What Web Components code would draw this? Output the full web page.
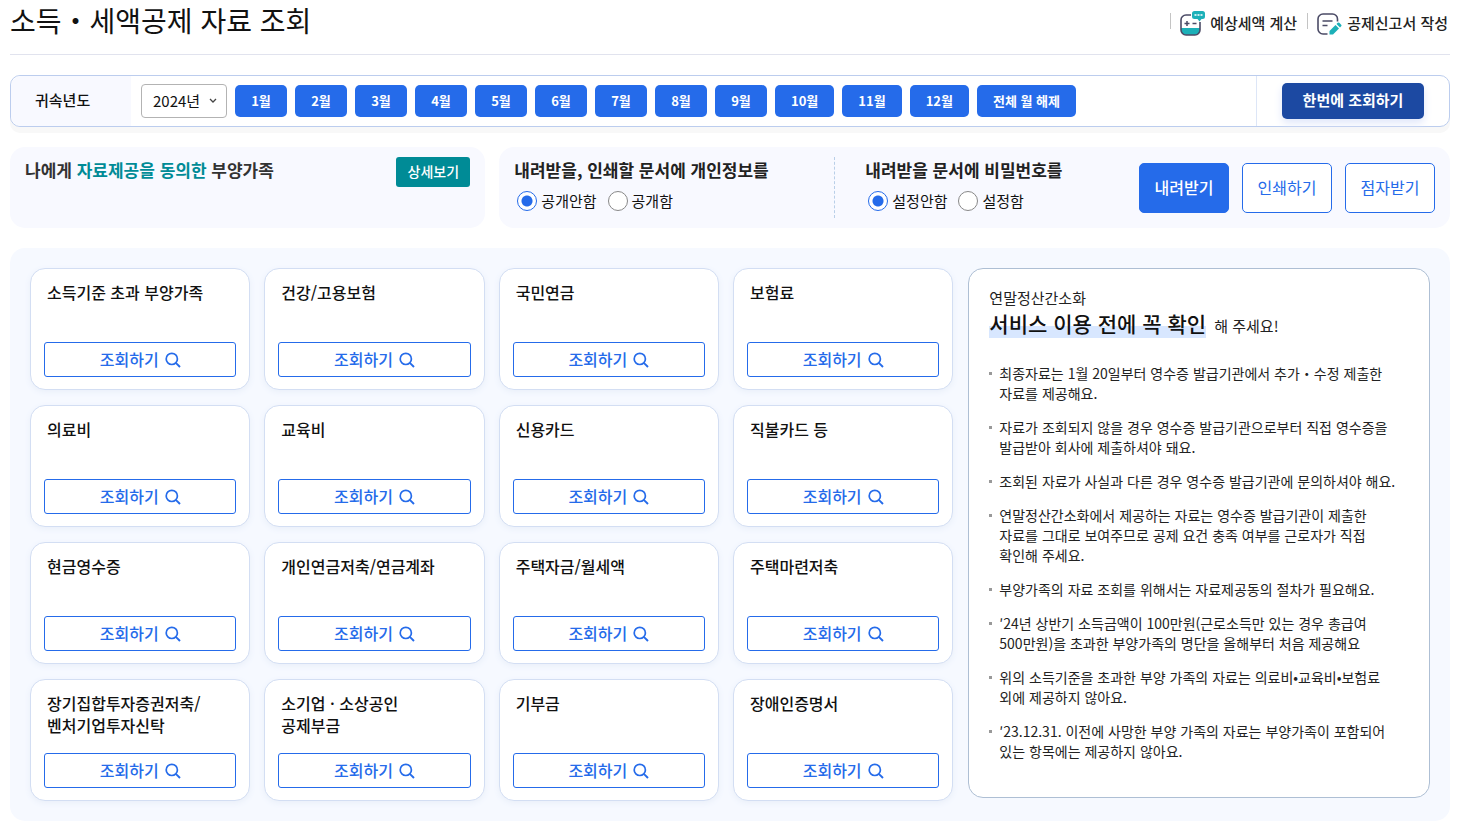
<!DOCTYPE html>
<html lang="ko">
<head>
<meta charset="UTF-8">
<meta name="viewport" content="width=device-width, initial-scale=1">
<title>소득・세액공제 자료 조회</title>
<style>
  body {
    margin: 0;
    padding: 0 9px 0 10px;
    background: #fff;
    color: #111;
    font-family: "Noto Sans CJK KR", sans-serif;
    font-size: 15px;
    line-height: 22px;
    --blue: #256bea;
    --navy: #1c49a2;
    --teal: #008b96;
    --pale: #f8f9ff;
  }
</style>
</head>
<body>
<tax-app></tax-app>

<script>
// small helper shared by every element
class BaseElement extends HTMLElement {
  constructor() {
    super();
    this.shadowDOM = this.attachShadow({ mode: 'open' });
  }

  connectedCallback() {
    this.render();
  }
}

class PageHeader extends BaseElement {
  render() {
    this.shadowDOM.innerHTML = `
    <style>
      :host {
        display: flex;
        justify-content: space-between;
        height: 54px;
        border-bottom: 1px solid #e1e3ee;
      }

      h1 {
        margin: 0;
        font-size: 28px;
        font-weight: 400;
        line-height: 40px;
      }

      nav {
        display: flex;
        align-items: center;
        height: 46px;
        margin-right: 2px;
      }

      a {
        display: flex;
        align-items: center;
        gap: 5px;
        color: #222;
        font-weight: 500;
        text-decoration: none;
      }

      a::before {
        content: "";
        width: 1px;
        height: 16px;
        margin: 0 3px 4px 10px;
        background: #c4c4c4;
      }
    </style>
    <h1>소득・세액공제 자료 조회</h1>
    <nav>
      <a href="#calc">
        <svg width="26" height="26" viewBox="0 0 26 26" fill="none" aria-hidden="true">
          <path d="M2 18h19v2a5 5 0 0 1-5 5H7a5 5 0 0 1-5-5z" fill="#1cb0b8"/>
          <path d="M12 5H7a5 5 0 0 0-5 5v10a5 5 0 0 0 5 5h9a5 5 0 0 0 5-5v-8" stroke="#4b4b66" stroke-width="1.6"/>
          <path d="M5.500 13.500h5M8 11v5M13.500 13.500h4" stroke="#4b4b66" stroke-width="1.500"/>
          <path d="M15.500 1h8a2.500 2.500 0 0 1 2.500 2.500v3a2.500 2.500 0 0 1-2.500 2.500h-1l-2 2.500-2-2.500h-3a2.500 2.500 0 0 1-2.500-2.500v-3a2.500 2.500 0 0 1 2.500-2.500z" fill="#1cb0b8"/>
          <path d="M15.500 5h2m1 0h2m1 0h2" stroke="#fff" stroke-width="1.600"/>
        </svg>
        예상세액 계산
      </a>
      <a href="#write">
        <svg width="26" height="26" viewBox="0 0 26 26" fill="none" aria-hidden="true">
          <path d="M21.500 11.500V9a5 5 0 0 0-5-5H7a5 5 0 0 0-5 5v10a5 5 0 0 0 5 5h4.500" stroke="#4b4b66" stroke-width="1.600"/>
          <path d="M6.500 11h10M6.500 15.500h5" stroke="#4b4b66" stroke-width="1.500"/>
          <path d="M13.500 21l6-6 3.500 3.500-6 6h-3.500z" fill="#1cb0b8"/>
          <path d="M20.500 14l1.200-1.200q.8-.8 1.600 0l1.900 1.900q.8.800 0 1.600L24 17.500z" fill="#1cb0b8"/>
        </svg>
        공제신고서 작성
      </a>
    </nav>
    `;
  }
}

class MonthFilter extends BaseElement {
  render() {
    let months = '';
    for (let i = 1; i <= 12; i++) {
      months += `<button type="button">${i}월</button>`;
    }

    this.shadowDOM.innerHTML = `
    <style>
      :host {
        display: flex;
        margin-top: 20px;
        height: 50px;
        border: 1px solid #bccdee;
        border-radius: 10px;
        box-shadow: 0 6px 0 #f8f8f8;
        background: #fff;
      }

      label {
        display: flex;
        align-items: center;
        width: 120px;
        box-sizing: border-box;
        padding: 0 0 2px 24px;
        border-radius: 10px 0 0 10px;
        background: var(--pale);
        font-weight: 500;
      }

      .months {
        display: flex;
        flex: 1;
        align-items: center;
        gap: 8px;
        padding-left: 10px;
      }

      .select {
        display: flex;
        align-items: center;
        position: relative;
      }

      select {
        appearance: none;
        width: 86px;
        height: 34px;
        padding: 0 0 0 11px;
        border: 1px solid #b3b3b3;
        border-radius: 4px;
        background: #fff;
        color: #111;
        font: inherit;
      }

      .select svg {
        position: absolute;
        right: 10px;
        pointer-events: none;
      }

      button {
        min-width: 52px;
        height: 32px;
        padding: 0 16px;
        border: 0;
        border-radius: 5px;
        background: var(--blue);
        color: #fff;
        font: 700 13px/20px "Noto Sans CJK KR", sans-serif;
        cursor: pointer;
      }

      .submit {
        display: flex;
        align-items: center;
        padding: 0 25px;
        border-left: 1px solid #dde6f7;
      }

      .submit button {
        width: 142px;
        height: 36px;
        padding-bottom: 2px;
        background: var(--navy);
        box-shadow: 0 4px 8px #dfe6fa;
        font-size: 15px;
      }
    </style>
    <label for="year">귀속년도</label>
    <div class="months">
      <div class="select">
        <select id="year"><option>2024년</option></select>
        <svg width="8" height="6" viewBox="0 0 8 6" fill="none"><path d="M1 1l3 3 3-3" stroke="#444" stroke-width="1.300"/></svg>
      </div>
      ${months}
      <button type="button">전체 월 해제</button>
    </div>
    <div class="submit"><button type="button">한번에 조회하기</button></div>
    `;
  }
}

class RadioGroup extends BaseElement {
  render() {
    const options = this.getAttribute('options').split(',');
    this.shadowDOM.innerHTML = `
    <style>
      :host {
        display: block;
      }

      fieldset {
        margin: 0;
        padding: 0;
        border: 0;
      }

      legend {
        padding: 0;
        color: #222;
        font-size: 17px;
        font-weight: 700;
        line-height: 22px;
      }

      .options {
        display: flex;
        gap: 11px;
        margin: 10px 0 0 3px;
      }

      label {
        display: flex;
        align-items: center;
        gap: 4px;
        line-height: 20px;
      }

      input {
        appearance: none;
        width: 20px;
        height: 20px;
        margin: 0;
        border: 1px solid #888;
        border-radius: 50%;
        background: #fff;
      }

      input:checked {
        border-color: var(--blue);
        background: radial-gradient(circle, var(--blue) 5px, #fff 6px);
      }
    </style>
    <fieldset>
      <legend><slot></slot></legend>
      <div class="options">
        ${options.map((text, i) => `
        <label for="opt${i}"><input type="radio" name="opt" id="opt${i}" ${i === 0 ? 'checked' : ''}>${text}</label>`).join('')}
      </div>
    </fieldset>
    `;
  }
}

class ActionButton extends BaseElement {
  render() {
    this.shadowDOM.innerHTML = `
    <style>
      :host {
        display: block;
      }

      button {
        width: 90px;
        height: 50px;
        padding: 0 0 2px;
        border: 1px solid var(--blue);
        border-radius: 5px;
        background: #fff;
        color: var(--blue);
        font: 400 16px/24px "Noto Sans CJK KR", sans-serif;
        cursor: pointer;
      }

      :host([primary]) button {
        background: var(--blue);
        color: #fff;
        font-weight: 500;
      }
    </style>
    <button type="button"><slot></slot></button>
    `;
  }
}

class OptionBar extends BaseElement {
  render() {
    this.shadowDOM.innerHTML = `
    <style>
      :host {
        display: grid;
        grid-template-columns: 1fr 2fr;
        gap: 14px;
        margin-top: 20px;
      }

      section {
        box-sizing: border-box;
        min-height: 81px;
        padding: 10px 15px;
        border-radius: 15px;
        background: var(--pale);
      }

      .family {
        display: flex;
        align-items: flex-start;
        justify-content: space-between;
      }

      h2 {
        margin: 2px 0 0;
        color: #333;
        font-size: 17px;
        font-weight: 700;
        line-height: 22px;
      }

      em {
        color: var(--teal);
        font-style: normal;
      }

      .family button {
        width: 74px;
        height: 30px;
        padding: 0 0 2px;
        border: 0;
        border-radius: 3px;
        background: var(--teal);
        color: #fff;
        font: 500 14px/20px "Noto Sans CJK KR", sans-serif;
      }

      .document {
        display: grid;
        grid-template-columns: 21fr 20fr auto;
      }

      radio-group {
        padding-top: 2px;
      }

      radio-group + radio-group {
        padding-left: 30px;
        border-left: 1px dashed #b9cfe8;
      }

      .buttons {
        display: flex;
        align-items: center;
        gap: 13px;
      }
    </style>
    <section class="family">
      <h2>나에게 <em>자료제공을 동의한</em> 부양가족</h2>
      <button type="button">상세보기</button>
    </section>
    <section class="document">
      <radio-group options="공개안함,공개함">내려받을, 인쇄할 문서에 개인정보를</radio-group>
      <radio-group options="설정안함,설정함">내려받을 문서에 비밀번호를</radio-group>
      <div class="buttons">
        <action-button primary>내려받기</action-button>
        <action-button>인쇄하기</action-button>
        <action-button>점자받기</action-button>
      </div>
    </section>
    `;
  }
}

class ItemCard extends BaseElement {
  render() {
    this.shadowDOM.innerHTML = `
    <style>
      :host {
        display: flex;
        flex-direction: column;
        justify-content: space-between;
        box-sizing: border-box;
        min-height: 122px;
        padding: 12px 13px;
        border: 1px solid #d3def3;
        border-radius: 15px;
        background: #fff;
        box-shadow: 0 2px 6px #e9eff9;
      }

      h3 {
        margin: 0 3px;
        font-size: 16px;
        font-weight: 500;
        line-height: 22px;
      }

      button {
        display: flex;
        align-items: center;
        justify-content: center;
        gap: 6px;
        height: 35px;
        padding: 0 0 2px;
        border: 1px solid var(--blue);
        border-radius: 3px;
        background: #fff;
        color: var(--blue);
        font: 500 16px/24px "Noto Sans CJK KR", sans-serif;
        cursor: pointer;
      }

      svg {
        margin-top: 3px;
      }
    </style>
    <h3><slot></slot></h3>
    <button type="button">조회하기
      <svg width="16" height="16" viewBox="0 0 16 16" fill="none" aria-hidden="true">
        <circle cx="6.800" cy="6.900" r="5.600" stroke="currentColor" stroke-width="1.700"/>
        <path d="M10.800 10.800l4.200 4.200" stroke="currentColor" stroke-width="1.900"/>
      </svg>
    </button>
    `;
  }
}

class NoticePanel extends BaseElement {
  render() {
    this.shadowDOM.innerHTML = `
    <style>
      :host {
        display: block;
        align-self: start;
        box-sizing: border-box;
        padding: 18px 26px 36px 20px;
        border: 1px solid #aebfd4;
        border-radius: 15px;
        background: #fff;
        color: #222;
        word-break: keep-all;
      }

      p {
        margin: 0;
      }

      .title {
        margin-bottom: 23px;
        line-height: 28px;
      }

      strong {
        margin-right: 4px;
        background: linear-gradient(transparent 60%, #d8e7ff 60%);
        color: #111;
        font-size: 21px;
        font-weight: 500;
      }

      ul {
        display: grid;
        gap: 14px;
        margin: 0;
        padding: 0;
        list-style: none;
        font-size: 14px;
        line-height: 20px;
      }

      ::slotted(li) {
        padding-left: 10px;
        background: linear-gradient(#999, #999) 0 9px / 3px 3px no-repeat;
      }
    </style>
    <p>연말정산간소화</p>
    <p class="title"><strong>서비스 이용 전에 꼭 확인</strong> 해 주세요!</p>
    <ul><slot></slot></ul>
    `;
  }
}

class TaxApp extends BaseElement {
  render() {
    const items = [
      '소득기준 초과 부양가족', '건강/고용보험', '국민연금', '보험료',
      '의료비', '교육비', '신용카드', '직불카드 등',
      '현금영수증', '개인연금저축/연금계좌', '주택자금/월세액', '주택마련저축',
      '장기집합투자증권저축/<br>벤처기업투자신탁', '소기업 · 소상공인<br>공제부금', '기부금', '장애인증명서'
    ];
    const notices = [
      '최종자료는 1월 20일부터 영수증 발급기관에서 추가・수정 제출한 자료를 제공해요.',
      '자료가 조회되지 않을 경우 영수증 발급기관으로부터 직접 영수증을 발급받아 회사에 제출하셔야 돼요.',
      '조회된 자료가 사실과 다른 경우 영수증 발급기관에 문의하셔야 해요.',
      '연말정산간소화에서 제공하는 자료는 영수증 발급기관이 제출한 자료를 그대로 보여주므로 공제 요건 충족 여부를 근로자가 직접 확인해 주세요.',
      '부양가족의 자료 조회를 위해서는 자료제공동의 절차가 필요해요.',
      '′24년 상반기 소득금액이 100만원(근로소득만 있는 경우 총급여 500만원)을 초과한 부양가족의 명단을 올해부터 처음 제공해요',
      '위의 소득기준을 초과한 부양 가족의 자료는 의료비•교육비•보험료 외에 제공하지 않아요.',
      '′23.12.31. 이전에 사망한 부양 가족의 자료는 부양가족이 포함되어 있는 항목에는 제공하지 않아요.'
    ];

    this.shadowDOM.innerHTML = `
    <style>
      :host {
        display: block;
      }

      main {
        display: grid;
        grid-template-columns: 2fr 1fr;
        gap: 15px;
        margin-top: 20px;
        padding: 20px;
        border-radius: 15px;
        background: #f6f9ff;
      }

      .cards {
        display: grid;
        grid-template-columns: repeat(4, 1fr);
        gap: 15px 14px;
      }
    </style>
    <page-header></page-header>
    <month-filter></month-filter>
    <option-bar></option-bar>
    <main>
      <div class="cards">${items.map((item) => `<item-card>${item}</item-card>`).join('')}</div>
      <notice-panel>${notices.map((text) => `<li>${text}</li>`).join('')}</notice-panel>
    </main>
    `;
  }
}

customElements.define('page-header', PageHeader);
customElements.define('month-filter', MonthFilter);
customElements.define('radio-group', RadioGroup);
customElements.define('action-button', ActionButton);
customElements.define('option-bar', OptionBar);
customElements.define('item-card', ItemCard);
customElements.define('notice-panel', NoticePanel);
customElements.define('tax-app', TaxApp);
</script>
</body>
</html>
